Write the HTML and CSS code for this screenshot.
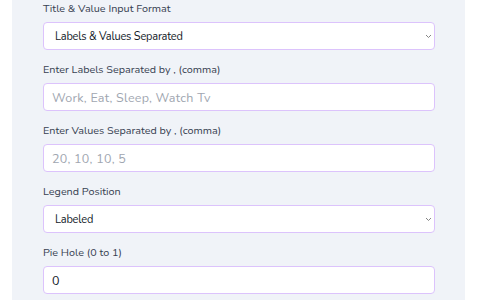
FILE: index.html
```html
<!DOCTYPE html>
<html lang="en">
<head>
    <meta charset="UTF-8">
    <meta name="viewport" content="width=device-width, initial-scale=1.0">
    <title>Pie Chart Maker</title>
    <link rel="stylesheet" href="styles.css">
</head>
<body>
    <div class="panel">
        <div class="field">
            <label for="format">Title &amp; Value Input Format</label>
            <div class="select-wrap">
                <select id="format" class="control">
                    <option>Labels &amp; Values Separated</option>
                    <option>Label:Value Pairs</option>
                </select>
                <svg class="chevron" width="7" height="5" viewBox="0 0 7 5"><path d="M1 1 L3.5 3.5 L6 1" fill="none" stroke="#777" stroke-width="0.9"/></svg>
            </div>
        </div>
        <div class="field">
            <label for="labels">Enter Labels Separated by , (comma)</label>
            <input id="labels" class="control" type="text" placeholder="Work, Eat, Sleep, Watch Tv">
        </div>
        <div class="field">
            <label for="values">Enter Values Separated by , (comma)</label>
            <input id="values" class="control" type="text" placeholder="20, 10, 10, 5">
        </div>
        <div class="field">
            <label for="legend">Legend Position</label>
            <div class="select-wrap">
                <select id="legend" class="control">
                    <option>Labeled</option>
                    <option>Top</option>
                    <option>Bottom</option>
                </select>
                <svg class="chevron" width="7" height="5" viewBox="0 0 7 5"><path d="M1 1 L3.5 3.5 L6 1" fill="none" stroke="#777" stroke-width="0.9"/></svg>
            </div>
        </div>
        <div class="field">
            <label for="hole">Pie Hole (0 to 1)</label>
            <input id="hole" class="control" type="text" value="0">
        </div>
    </div>
</body>
</html>
```

FILE: styles.css
```css
* {
    margin: 0;
    padding: 0;
    box-sizing: border-box;
}

body {
    background-color: #fff;
    font-family: "Nunito", "Noto Sans", Arial, sans-serif;
    color: #374151;
}

/* Form panel */
.panel {
    width: 453px;
    min-height: 300px;
    margin-left: 12px;
    padding: 2px 30px 0 31px;
    background-color: #f0f3f8;
    display: flex;
    flex-direction: column;
    gap: 13px;
}

.field {
    display: flex;
    flex-direction: column;
    gap: 6px;
}

.field label {
    font-size: 10.8px;
    line-height: 14px;
    color: #374151;
}

.control {
    width: 100%;
    height: 28px;
    padding: 0 8px;
    border: 1.5px solid #dcc3fc;
    border-radius: 4px;
    background-color: #fff;
    font-family: "Nunito", "Noto Sans", Arial, sans-serif;
    font-size: 12.5px;
    letter-spacing: 0.25px;
    color: #111827;
    outline: none;
}

.control::placeholder {
    color: #a0a6b0;
}

select.control {
    appearance: none;
    -webkit-appearance: none;
    padding-left: 11px;
    font-size: 11px;
    letter-spacing: -0.2px;
}

.select-wrap {
    position: relative;
}

.chevron {
    position: absolute;
    right: 3px;
    top: 12px;
}
```
